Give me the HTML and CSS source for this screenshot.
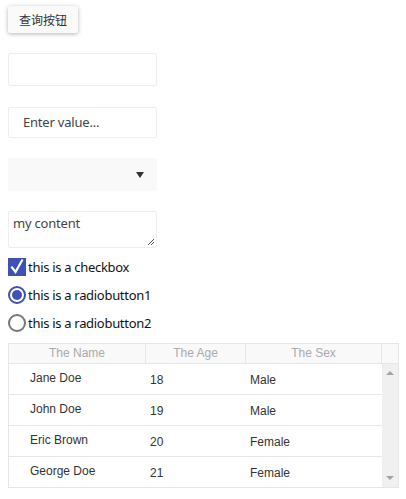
FILE: index.html
```html
<!DOCTYPE html>
<html>
<head>
<meta charset="utf-8">
<link rel="stylesheet" href="styles.css">
</head>
<body>
<div class="page">
  <button class="btn">查询按钮</button>
  <div class="field"></div>
  <div class="field field-text">Enter value...</div>
  <div class="select"><span class="arrow"></span></div>
  <div class="textarea">my content
    <svg class="grip" width="8" height="8" viewBox="0 0 8 8"><path d="M7 1L1 7M7 4L4 7" stroke="#555" stroke-width="1"/></svg>
  </div>
  <div class="checks">
    <label class="opt"><span class="cb"><svg width="18" height="18" viewBox="0 0 18 18"><path d="M4 9.5L7.5 14L14 2.5" fill="none" stroke="#fff" stroke-width="2.2" stroke-linecap="square"/></svg></span>this is a checkbox</label>
    <label class="opt"><span class="radio on"><span class="dot"></span></span>this is a radiobutton1</label>
    <label class="opt"><span class="radio"></span>this is a radiobutton2</label>
  </div>
  <div class="table">
    <div class="thead">
      <div class="th c1">The Name</div>
      <div class="th c2">The Age</div>
      <div class="th c3">The Sex</div>
      <div class="th c4"></div>
    </div>
    <div class="tbody">
      <div class="rows">
        <div class="tr"><div class="td c1 name">Jane Doe</div><div class="td c2">18</div><div class="td c3">Male</div></div>
        <div class="tr"><div class="td c1 name">John Doe</div><div class="td c2">19</div><div class="td c3">Male</div></div>
        <div class="tr"><div class="td c1 name">Eric Brown</div><div class="td c2">20</div><div class="td c3">Female</div></div>
        <div class="tr last"><div class="td c1 name">George Doe</div><div class="td c2">21</div><div class="td c3">Female</div></div>
      </div>
      <div class="scrollbar">
        <span class="up"></span>
        <span class="down"></span>
      </div>
    </div>
  </div>
</div>
</body>
</html>
```
FILE: styles.css
```css
* { box-sizing: border-box; }
html, body { margin: 0; padding: 0; background: #fff; }
body { font-family: "Noto Sans", "Noto Sans CJK SC", sans-serif; color: #333; }
.page { padding: 6px 8px 0 8px; display: flex; flex-direction: column; align-items: flex-start; }
.btn {
  height: 27px; padding: 0 11px; border: none; border-radius: 2px;
  background: #fafafa; color: #333; font-size: 12px;
  font-family: "Noto Sans CJK SC", sans-serif;
  box-shadow: 0 1px 4px rgba(0,0,0,0.3);
}
.field {
  margin-top: 20px; width: 149px; height: 33px;
  border: 1px solid #eee; border-radius: 2px;
}
.field-text {
  margin-top: 21px; height: 31px; padding-left: 14px;
  font-size: 13px; line-height: 29px; color: #444; letter-spacing: -0.2px;
}
.select {
  margin-top: 20px; width: 149px; height: 33px; background: #f9f9f9;
  position: relative;
}
.arrow {
  position: absolute; left: 128px; top: 14px;
  width: 0; height: 0;
  border-left: 4.5px solid transparent; border-right: 4.5px solid transparent;
  border-top: 6px solid #333;
}
.textarea {
  margin-top: 20px; width: 149px; height: 37px; position: relative;
  border: 1px solid #eee; border-radius: 2px;
  padding: 2px 4px; font-size: 13px; line-height: 18px; color: #444; letter-spacing: -0.2px;
}
.grip { position: absolute; right: 1px; bottom: 1px; }
.checks { margin-top: 10px; display: flex; flex-direction: column; gap: 10px; }
.opt { display: flex; align-items: center; height: 18px; font-size: 13px; color: #111; letter-spacing: -0.3px; }
.cb {
  width: 18px; height: 18px; background: #3f51b5; margin-right: 2px; display: block;
}
.cb svg { display: block; }
.radio {
  width: 18px; height: 18px; border-radius: 50%; border: 2px solid #777;
  margin-right: 2px; display: flex; align-items: center; justify-content: center;
}
.radio.on { border-color: #3f51b5; }
.dot { width: 10px; height: 10px; border-radius: 50%; background: #3f51b5; }
.table {
  margin-top: 11px; width: 391px; border: 1px solid #e6e6e6;
  font-family: "Liberation Sans", Arial, sans-serif; font-size: 12px;
}
.thead { display: flex; height: 20px; background: #f9f9f9; border-bottom: 1px solid #e6e6e6; }
.th { color: #aaa; text-align: center; line-height: 19px; border-right: 1px solid #e6e6e6; }
.th.c4 { border-right: none; flex: 1; }
.c1 { width: 137px; }
.c2 { width: 100px; }
.c3 { width: 136px; }
.tbody { display: flex; }
.rows { width: 373px; }
.tr { display: flex; height: 31px; border-bottom: 1px solid #e6e6e6; }
.tr.last { border-bottom: none; height: 30px; }
.td { color: #333; padding-left: 4px; line-height: 30px; padding-top: 1px; }
.td.name { padding-left: 21px; padding-top: 0; line-height: 28px; }
.scrollbar { flex: 1; background: #f0f0f0; position: relative; }
.up, .down { position: absolute; left: 4px; width: 0; height: 0;
  border-left: 4px solid transparent; border-right: 4px solid transparent; }
.up { top: 7px; border-bottom: 4px solid #a3a3a3; }
.down { bottom: 7px; border-top: 4px solid #a3a3a3; }
```
